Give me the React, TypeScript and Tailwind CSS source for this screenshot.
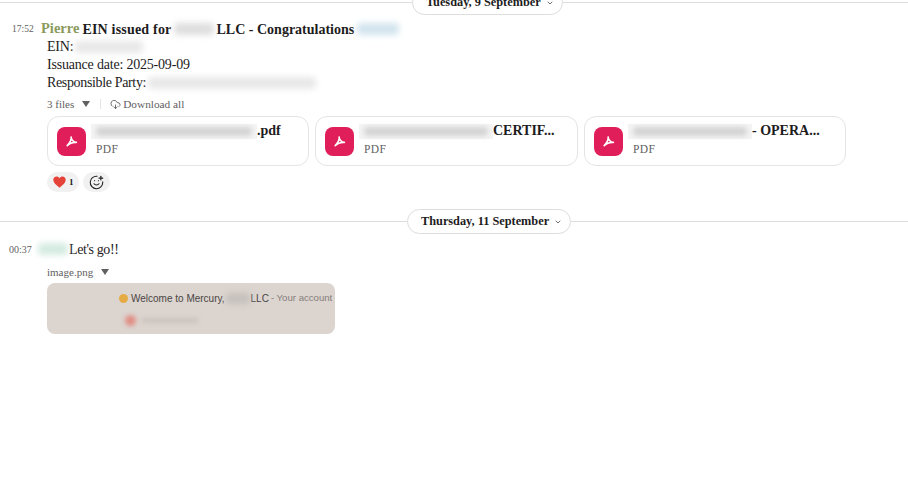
import { ChevronDown, CloudDownload, SmilePlus } from "lucide-react";

const serif = "font-['Liberation_Serif','Noto_Serif',serif]";

function DateDivider({ label, lead, className }: { label: string; lead: string; className: string }) {
  return (
    <div className={`flex items-center ${className}`}>
      <div className={`h-px bg-[#dddddd] ${lead}`} />
      <div className="flex h-[25px] shrink-0 items-center gap-[5px] rounded-full border border-[#dddddd] bg-white pl-[13px] pr-[8px] text-[12.3px] font-bold text-[#1d1c1d]">
        {label}
        <ChevronDown size={8} strokeWidth={2.5} className="text-[#555555]" />
      </div>
      <div className="h-px flex-1 bg-[#dddddd]" />
    </div>
  );
}

function Smudge({ className }: { className: string }) {
  return <span className={`inline-block shrink-0 rounded-sm blur-[3px] ${className}`} />;
}

function PdfCard({ smudge, suffix, width }: { smudge: string; suffix: string; width: string }) {
  return (
    <div className={`flex h-[50px] items-center gap-[5px] rounded-xl border border-[#e4e4e4] bg-white pl-[9px] ${width}`}>
      <div className="flex size-[29px] shrink-0 items-center justify-center rounded-lg bg-[#e01e5a]">
        <svg width="13" height="13" viewBox="0 0 16 16" fill="none" stroke="white" strokeWidth="2" strokeLinecap="round" strokeLinejoin="round">
          <path d="M7.6 2.4c.5 3-1.4 7-4.9 10.7M7.6 2.4c-.3 3 3 6.5 6.4 6.700M2.700 13.100C6 9.800 10 8.800 14 9.100" />
        </svg>
      </div>
      <div className="-mt-[5px] flex min-w-0 flex-col">
        <div className="flex h-[19px] items-center text-[14px] font-bold text-[#1d1c1d]">
          <span className={`inline-block h-[15px] shrink-0 bg-[#f4f4f4] px-[5px] py-[3px] ${smudge}`}>
            <span className="block h-full rounded-sm bg-[#d4d4d4] blur-[2.5px]" />
          </span>
          <span className="whitespace-pre">{suffix}</span>
        </div>
        <div className="mt-[1px] pl-[5px] text-[11.5px] leading-[14px] tracking-[0.4px] text-[#616061]">PDF</div>
      </div>
    </div>
  );
}

export default function App() {
  return (
    <div className={`h-[487px] w-[908px] overflow-hidden bg-white text-[14px] text-[#1d1c1d] ${serif}`}>
      <DateDivider label="Tuesday, 9 September" lead="w-[412px]" className="-mt-[10px]" />

      <section className="mt-[5px]">
        <div className="flex h-[18px] items-center">
          <span className="ml-[12px] w-[29px] text-[9.5px] text-[#616061]">17:52</span>
          <span className="text-[14.5px] font-bold text-[#8a9a5b]">Pierre</span>
          <span className="ml-[3px] tracking-[0.2px] font-bold">EIN issued for</span>
          <Smudge className="ml-[2px] h-[12px] w-[40px] bg-[#dedede]" />
          <span className="ml-[3px] font-bold">LLC - Congratulations</span>
          <Smudge className="ml-[3px] h-[12px] w-[42px] bg-[#d2e4ee]" />
        </div>

        <div className="ml-[47px] leading-[18px]">
          <div className="flex items-center tracking-[-0.2px]">
            EIN:
            <Smudge className="ml-[2px] h-[12px] w-[68px] bg-[#e8e8e8]" />
          </div>
          <div className="tracking-[-0.2px]">Issuance date: 2025-09-09</div>
          <div className="flex items-center tracking-[-0.35px]">
            Responsible Party:
            <Smudge className="ml-[2px] h-[12px] w-[168px] bg-[#e8e8e8]" />
          </div>

          <div className="mt-[3px] flex h-[18px] items-center text-[11px] text-[#616061]">
            <span>3 files</span>
            <span className="ml-[8px] h-0 w-0 border-x-[4px] border-t-[6px] border-x-transparent border-t-[#616061]" />
            <span className="ml-[10px] h-[10px] w-px bg-[#e4e4e4]" />
            <CloudDownload size={11} className="ml-[9px] mr-[2px]" />
            <span className="text-[11.3px]">Download all</span>
          </div>

          <div className="mt-[3px] flex gap-[6px]">
            <PdfCard smudge="w-[166px]" suffix=".pdf" width="w-[262px]" />
            <PdfCard smudge="w-[134px]" suffix="CERTIF..." width="w-[263px]" />
            <PdfCard smudge="w-[124px]" suffix="- OPERA..." width="w-[262px]" />
          </div>

          <div className="mt-[6px] flex gap-[4px]">
            <div className="flex h-[20px] w-[32px] items-center gap-[3px] rounded-full bg-[#f1f1f1] pl-[6px]">
              <svg width="13" height="12" viewBox="0 0 24 22">
                <path fill="#e5433a" d="M12 21.500C5 16 .5 11.800.5 6.800.5 3.200 3.200.8 6.500.8c2.300 0 4.300 1.200 5.500 3.200C13.200 2 15.200.8 17.500.8c3.300 0 6 2.400 6 6 0 5-4.500 9.200-11.500 14.700z" />
              </svg>
              <span className="text-[9px] font-bold">1</span>
            </div>
            <div className="flex h-[20px] w-[27px] items-center justify-center rounded-full bg-[#f1f1f1]">
              <SmilePlus size={15} strokeWidth={1.7} className="text-[#1d1c1d]" />
            </div>
          </div>
        </div>
      </section>

      <DateDivider label="Thursday, 11 September" lead="w-[407px]" className="mt-[17px]" />

      <section className="mt-[6px]">
        <div className="flex h-[18px] items-center">
          <span className="ml-[9px] w-[29px] text-[10px] text-[#616061]">00:37</span>
          <Smudge className="h-[12px] w-[30px] bg-[#d4ebe0]" />
          <span className="ml-[1px] tracking-[-0.4px]">Let's go!!</span>
        </div>

        <div className="ml-[47px]">
          <div className="mt-[7px] flex h-[14px] items-center text-[11px] text-[#616061]">
            <span>image.png</span>
            <span className="ml-[8px] h-0 w-0 border-x-[4px] border-t-[6px] border-x-transparent border-t-[#616061]" />
          </div>
          <div className="mt-[4px] h-[51px] w-[288px] overflow-hidden rounded-lg bg-[#dcd4cf] pl-[72px] pt-[9px] font-['Liberation_Sans',sans-serif] text-[10px]">
            <div className="flex h-[12px] items-center whitespace-nowrap text-[#4a4644]">
              <span className="mr-[3px] size-[9px] shrink-0 rounded-full bg-[#e5ac45] blur-[0.5px]" />
              <span>Welcome to Mercury,</span>
              <Smudge className="mx-[1px] h-[11px] w-[24px] bg-[#c5c0bc]" />
              <span>LLC</span>
              <span className="ml-[2px] text-[9.6px] text-[#85807c]">- Your account</span>
            </div>
            <div className="mt-[9px] flex h-[14px] w-[100px] items-center gap-[6px] pl-[6px] blur-[2px]">
              <span className="size-[11px] shrink-0 rounded-full bg-[#e08f85]" />
              <span className="h-[5px] w-[56px] bg-[#cbc3be]" />
            </div>
          </div>
        </div>
      </section>
    </div>
  );
}
